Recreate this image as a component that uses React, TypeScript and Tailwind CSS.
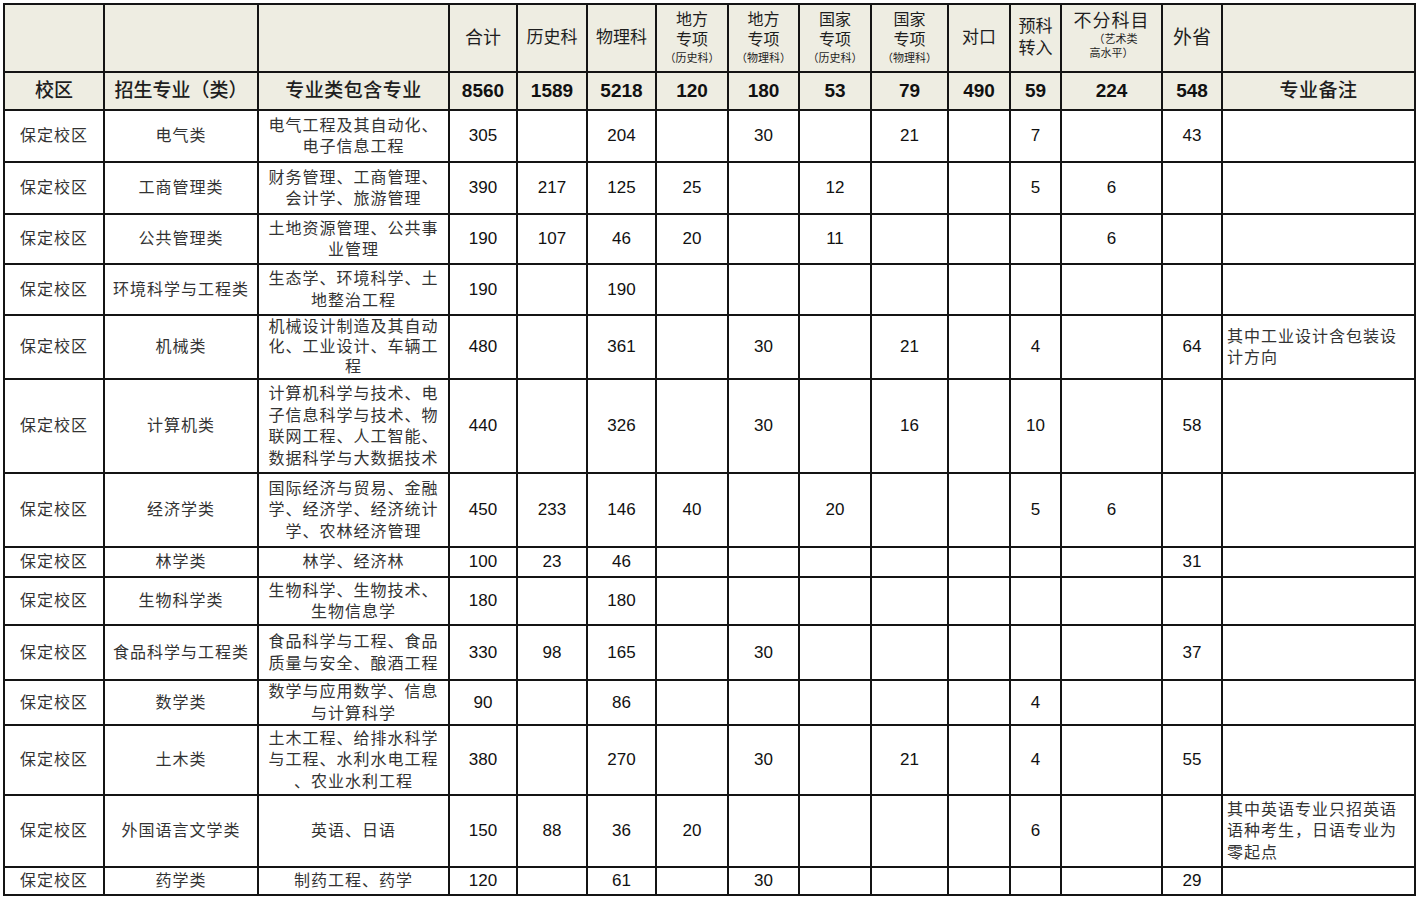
import React from 'react';

const CJK = "font-['Liberation_Sans','Noto_Sans_CJK_SC',sans-serif]";
const NUM = "font-['Liberation_Sans',Arial,sans-serif]";

const COLS = [100, 154, 191, 68, 70, 69, 72, 71, 72, 77, 62, 51, 101, 60, 193];

interface Row {
  major: string;
  sub: string[];
  h: number;
  tight?: boolean;
  nums: (number | null)[]; // 合计 历史 物理 地方历 地方物 国家历 国家物 对口 预科 不分 外省
  note?: string[];
}

const ROWS: Row[] = [
  { major: '电气类', sub: ['电气工程及其自动化、', '电子信息工程'], h: 52, nums: [305, null, 204, null, 30, null, 21, null, 7, null, 43] },
  { major: '工商管理类', sub: ['财务管理、工商管理、', '会计学、旅游管理'], h: 52, nums: [390, 217, 125, 25, null, 12, null, null, 5, 6, null] },
  { major: '公共管理类', sub: ['土地资源管理、公共事', '业管理'], h: 50, nums: [190, 107, 46, 20, null, 11, null, null, null, 6, null] },
  { major: '环境科学与工程类', sub: ['生态学、环境科学、土', '地整治工程'], h: 51, nums: [190, null, 190, null, null, null, null, null, null, null, null] },
  { major: '机械类', sub: ['机械设计制造及其自动', '化、工业设计、车辆工', '程'], h: 64, tight: true, nums: [480, null, 361, null, 30, null, 21, null, 4, null, 64], note: ['其中工业设计含包装设', '计方向'] },
  { major: '计算机类', sub: ['计算机科学与技术、电', '子信息科学与技术、物', '联网工程、人工智能、', '数据科学与大数据技术'], h: 94, nums: [440, null, 326, null, 30, null, 16, null, 10, null, 58] },
  { major: '经济学类', sub: ['国际经济与贸易、金融', '学、经济学、经济统计', '学、农林经济管理'], h: 74, nums: [450, 233, 146, 40, null, 20, null, null, 5, 6, null] },
  { major: '林学类', sub: ['林学、经济林'], h: 30, nums: [100, 23, 46, null, null, null, null, null, null, null, 31] },
  { major: '生物科学类', sub: ['生物科学、生物技术、', '生物信息学'], h: 48, nums: [180, null, 180, null, null, null, null, null, null, null, null] },
  { major: '食品科学与工程类', sub: ['食品科学与工程、食品', '质量与安全、酿酒工程'], h: 55, nums: [330, 98, 165, null, 30, null, null, null, null, null, 37] },
  { major: '数学类', sub: ['数学与应用数学、信息', '与计算科学'], h: 45, nums: [90, null, 86, null, null, null, null, null, 4, null, null] },
  { major: '土木类', sub: ['土木工程、给排水科学', '与工程、水利水电工程', '、农业水利工程'], h: 70, nums: [380, null, 270, null, 30, null, 21, null, 4, null, 55] },
  { major: '外国语言文学类', sub: ['英语、日语'], h: 72, nums: [150, 88, 36, 20, null, null, null, null, 6, null, null], note: ['其中英语专业只招英语', '语种考生，日语专业为', '零起点'] },
  { major: '药学类', sub: ['制药工程、药学'], h: 27, nums: [120, null, 61, null, 30, null, null, null, null, null, 29] },
];

const TOTALS = [8560, 1589, 5218, 120, 180, 53, 79, 490, 59, 224, 548];

const cell = 'border-2 border-[#141414] p-0 align-middle text-center';
const head = `${cell} bg-[#eeede2]`;

function Special({ a, b, c }: { a: string; b: string; c: string }) {
  return (
    <div className={`${CJK} flex flex-col items-center text-[#1e1e1e] pb-[2px]`}>
      <span className="text-[16px] leading-[20px]">{a}</span>
      <span className="text-[16px] leading-[20px]">{b}</span>
      <span className="text-[11px] leading-[14px] mt-[1px]">{c}</span>
    </div>
  );
}

export default function App() {
  return (
    <div className="w-[1422px] h-[900px] bg-white overflow-hidden pt-[3px] pl-[3px]">
      <table className="table-fixed border-collapse w-[1413px]">
        <colgroup>
          {COLS.map((w, i) => (
            <col key={i} style={{ width: w }} />
          ))}
        </colgroup>
        <tbody>
          {/* header row 1 */}
          <tr className="h-[68px]">
            <td className={head}></td>
            <td className={head}></td>
            <td className={head}></td>
            <td className={`${head} ${CJK} text-[18px] text-[#1e1e1e]`}>合计</td>
            <td className={`${head} ${CJK} text-[17px] text-[#1e1e1e]`}>历史科</td>
            <td className={`${head} ${CJK} text-[17px] text-[#1e1e1e]`}>物理科</td>
            <td className={head}><Special a="地方" b="专项" c="（历史科）" /></td>
            <td className={head}><Special a="地方" b="专项" c="（物理科）" /></td>
            <td className={head}><Special a="国家" b="专项" c="（历史科）" /></td>
            <td className={head}><Special a="国家" b="专项" c="（物理科）" /></td>
            <td className={`${head} ${CJK} text-[17px] text-[#1e1e1e]`}>对口</td>
            <td className={`${head} ${CJK} text-[17px] leading-[22px] text-[#1e1e1e]`}>
              预科
              <br />
              转入
            </td>
            <td className={head}>
              <div className={`${CJK} flex flex-col items-center text-[#1e1e1e] pb-[6px]`}>
                <span className="text-[18px] leading-[22px] tracking-[1px]">不分科目</span>
                <span className="text-[11px] leading-[14px] pl-[8px]">（艺术类</span>
                <span className="text-[11px] leading-[14px]">高水平）</span>
              </div>
            </td>
            <td className={`${head} ${CJK} text-[19px] text-[#1e1e1e]`}>外省</td>
            <td className={head}></td>
          </tr>
          {/* header row 2 */}
          <tr className="h-[38px]">
            <td className={`${head} ${CJK} text-[19px] font-medium text-[#1e1e1e]`}>校区</td>
            <td className={`${head} ${CJK} text-[19px] font-medium text-[#1e1e1e]`}>招生专业（类）</td>
            <td className={`${head} ${CJK} text-[19px] font-medium text-[#1e1e1e] tracking-[0.5px]`}>专业类包含专业</td>
            {TOTALS.map((n, i) => (
              <td key={i} className={`${head} ${NUM} text-[19px] font-bold text-[#111]`}>
                {n}
              </td>
            ))}
            <td className={`${head} ${CJK} text-[19px] font-medium text-[#1e1e1e] tracking-[0.5px]`}>专业备注</td>
          </tr>
          {ROWS.map((r, i) => (
            <tr key={i} style={{ height: r.h }}>
              <td className={`${cell} ${CJK} text-[16px] tracking-[1px] text-[#333]`}>保定校区</td>
              <td className={`${cell} ${CJK} text-[16px] tracking-[1px] text-[#333] whitespace-nowrap`}>{r.major}</td>
              <td
                className={`${cell} ${CJK} text-[16px] tracking-[1px] text-[#333] whitespace-nowrap ${
                  r.tight ? 'leading-[20px]' : 'leading-[21.5px]'
                }`}
              >
                {r.sub.map((s, j) => (
                  <div key={j}>{s}</div>
                ))}
              </td>
              {r.nums.map((n, j) => (
                <td key={j} className={`${cell} ${NUM} text-[17px] text-[#111]`}>
                  {n ?? ''}
                </td>
              ))}
              <td className={`${cell} ${CJK} text-left pl-[4px] text-[16px] leading-[21.5px] tracking-[1px] text-[#333] whitespace-nowrap`}>
                {r.note?.map((s, j) => (
                  <div key={j}>{s}</div>
                ))}
              </td>
            </tr>
          ))}
        </tbody>
      </table>
    </div>
  );
}
